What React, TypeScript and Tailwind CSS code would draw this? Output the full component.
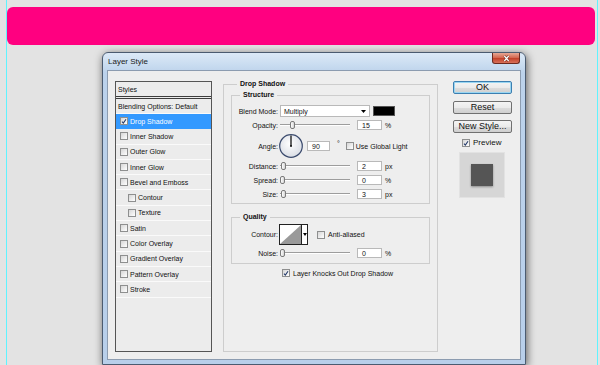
import React from "react";

type StyleItem = { label: string; on?: boolean; active?: boolean; sub?: boolean };

const styleItems: StyleItem[] = [
  { label: "Drop Shadow", on: true, active: true },
  { label: "Inner Shadow" },
  { label: "Outer Glow" },
  { label: "Inner Glow" },
  { label: "Bevel and Emboss" },
  { label: "Contour", sub: true },
  { label: "Texture", sub: true },
  { label: "Satin" },
  { label: "Color Overlay" },
  { label: "Gradient Overlay" },
  { label: "Pattern Overlay" },
  { label: "Stroke" },
];

function Box({ on }: { on?: boolean }) {
  return (
    <span className="flex h-[8px] w-[8px] shrink-0 items-center justify-center border border-[#8e8f8f] bg-[linear-gradient(135deg,#d6d6d6,#ffffff)]">
      {on && (
        <svg viewBox="0 0 8 8" className="h-[7px] w-[7px]">
          <path d="M1.3 4.3 L3.1 6.2 L6.7 1" fill="none" stroke="#233a6b" strokeWidth="1.4" />
        </svg>
      )}
    </span>
  );
}

function Slider({ at }: { at: number }) {
  return (
    <div className="relative ml-[2px] h-[10px] w-[70px] shrink-0">
      <div className="absolute left-0 right-0 top-[4px] h-[2px] border-t border-[#9d9d9d] bg-white" />
      <div
        className="absolute top-[1px] h-[8px] w-[5px] rounded-[2px] border border-[#7b7b7b] bg-[linear-gradient(90deg,#ffffff,#d5d5d5)]"
        style={{ left: at }}
      />
    </div>
  );
}

function SliderRow({ label, value, unit, at }: { label: string; value: string; unit: string; at: number }) {
  return (
    <div className="flex h-[14px] items-center">
      <span className="w-[46px] text-right">{label}</span>
      <Slider at={at} />
      <div className="ml-[7px] flex h-[10px] w-[25px] items-center border border-[#b9b9b9] bg-white pl-[4px]">{value}</div>
      <span className="ml-[3px]">{unit}</span>
    </div>
  );
}

function Btn({ children, main }: { children: React.ReactNode; main?: boolean }) {
  return (
    <div
      className={
        "flex h-[13px] items-center justify-center rounded-[2px] border bg-[linear-gradient(180deg,#f4f4f4_0%,#ebebeb_50%,#dddddd_51%,#cfcfcf_100%)] text-[9px] " +
        (main ? "border-[#3c7fb1] shadow-[inset_0_0_0_1px_#9ad6f2]" : "border-[#707070]")
      }
    >
      {children}
    </div>
  );
}

export default function App() {
  return (
    <div className="relative h-[365px] w-[600px] overflow-hidden bg-[#e3e3e3] font-['Liberation_Sans',Arial,sans-serif] text-[7px] leading-none text-[#111]">
      <div className="ml-[7px] mt-[7px] h-[38px] w-[588px] rounded-[6px] bg-[#ff0080]" />

      <div className="ml-[102px] mt-[7px] flex h-[313px] w-[424px] flex-col rounded-t-[6px] border border-[#4b5b70] bg-[linear-gradient(180deg,#dce9f7_0px,#c9dcf0_12px,#bcd2eb_20px,#b8cfea_100%)] shadow-[1px_2px_9px_rgba(0,0,0,0.6)]">
        {/* title bar */}
        <div className="flex h-[17px] items-start justify-between pl-[5px] pr-[5px]">
          <span className="pt-[5px] text-[8px] text-[#1b1b1b]">Layer Style</span>
          <div className="flex h-[11px] w-[28px] items-center justify-center rounded-b-[3px] border border-t-0 border-[#6b2a20] bg-[linear-gradient(180deg,#e6a895_0%,#d46a52_45%,#c3432b_55%,#d8705a_100%)]">
            <svg viewBox="0 0 10 8" className="h-[7px] w-[9px]">
              <path d="M2.5 1.2 L7.5 6.8 M7.5 1.2 L2.5 6.8" stroke="#5a2016" strokeWidth="2.6" />
              <path d="M2.5 1.2 L7.5 6.8 M7.5 1.2 L2.5 6.8" stroke="#ffffff" strokeWidth="1.5" />
            </svg>
          </div>
        </div>

        {/* content */}
        <div className="mx-[4px] mb-[4px] flex flex-1 items-start border border-[#8c9cb0] bg-[#eeeeee] pl-[7px] pt-[10px]">
          {/* styles list */}
          <div className="flex h-[271px] w-[97px] shrink-0 flex-col border border-[#555555] bg-[#ececec]">
            <div className="flex h-[17px] items-center border-b-[3px] border-double border-[#3d3d3d] pl-[2px]">Styles</div>
            <div className="flex h-[15px] items-center border-b border-[#fafafa] pl-[2px]">Blending Options: Default</div>
            {styleItems.map((it) => (
              <div
                key={it.label}
                className={
                  "flex h-[15.3px] items-center gap-[2px] border-b " +
                  (it.sub ? "pl-[12px] " : "pl-[4px] ") +
                  (it.active ? "border-[#3399ff] bg-[#3399ff] text-white" : "border-[#fafafa]")
                }
              >
                <Box on={it.on} />
                <span>{it.label}</span>
              </div>
            ))}
          </div>

          {/* drop shadow group */}
          <fieldset className="-mt-[1px] ml-[11px] h-[272px] w-[215px] shrink-0 border border-[#cdcdcd]">
            <legend className="ml-[13px] px-[3px] text-[7px] font-bold leading-[8px]">Drop Shadow</legend>

            <fieldset className="mx-[7px] mt-[3px] border border-[#cdcdcd] pb-[2px] pt-[6px]">
              <legend className="ml-[8px] px-[3px] font-bold leading-[8px]">Structure</legend>
              <div className="flex h-[12px] items-center">
                <span className="w-[46px] text-right">Blend Mode:</span>
                <div className="ml-[2px] flex h-[12px] w-[90px] items-center justify-between border border-[#b9b9b9] bg-white pl-[3px] pr-[3px]">
                  <span>Multiply</span>
                  <svg viewBox="0 0 5 3" className="h-[3px] w-[5px]">
                    <path d="M0 0 H5 L2.5 3 Z" fill="#000" />
                  </svg>
                </div>
                <div className="ml-[3px] h-[10px] w-[22px] border border-[#555] bg-black" />
              </div>
              <div className="mt-[1px]">
                <SliderRow label="Opacity:" value="15" unit="%" at={10} />
              </div>
              <div className="mt-[2px] flex h-[24px] items-center">
                <span className="w-[46px] text-right">Angle:</span>
                <svg viewBox="0 0 24 24" className="ml-[1px] h-[24px] w-[24px] shrink-0">
                  <defs>
                    <radialGradient id="dial" cx="45%" cy="40%" r="65%">
                      <stop offset="0%" stopColor="#ffffff" />
                      <stop offset="100%" stopColor="#d7dbe3" />
                    </radialGradient>
                  </defs>
                  <circle cx="12" cy="12" r="11.3" fill="url(#dial)" stroke="#3b4b6e" strokeWidth="1.2" />
                  <path d="M12 12 V1.5" stroke="#111" strokeWidth="1.3" />
                  <circle cx="12" cy="12" r="1" fill="#111" />
                </svg>
                <div className="ml-[4px] flex h-[10px] w-[23px] items-center border border-[#b9b9b9] bg-white pl-[4px]">90</div>
                <span className="ml-[7px] self-start pt-[6px]">°</span>
                <span className="ml-[6px]">
                  <Box />
                </span>
                <span className="ml-[2px]">Use Global Light</span>
              </div>
              <div className="mt-[1px]">
                <SliderRow label="Distance:" value="2" unit="px" at={1} />
                <SliderRow label="Spread:" value="0" unit="%" at={0} />
                <SliderRow label="Size:" value="3" unit="px" at={1} />
              </div>
            </fieldset>

            <fieldset className="mx-[7px] mt-[9px] border border-[#cdcdcd] pb-[3px] pt-[3px]">
              <legend className="ml-[8px] px-[3px] font-bold leading-[8px]">Quality</legend>
              <div className="flex h-[21px] items-center">
                <span className="w-[46px] text-right">Contour:</span>
                <div className="ml-[1px] flex h-[21px] w-[29px] border border-[#222] bg-white">
                  <svg viewBox="0 0 22 19" preserveAspectRatio="none" className="h-[19px] w-[22px] border-r border-[#222]">
                    <path d="M0 19 L22 0 V19 Z" fill="#9a9a9a" />
                  </svg>
                  <div className="flex flex-1 items-center justify-center">
                    <svg viewBox="0 0 4 3" className="h-[3px] w-[4px]">
                      <path d="M0 0 H4 L2 3 Z" fill="#000" />
                    </svg>
                  </div>
                </div>
                <span className="ml-[9px]">
                  <Box />
                </span>
                <span className="ml-[3px]">Anti-aliased</span>
              </div>
              <div className="mt-[1px]">
                <SliderRow label="Noise:" value="0" unit="%" at={0} />
              </div>
            </fieldset>

            <div className="mt-[4px] flex h-[10px] items-center pl-[58px]">
              <Box on />
              <span className="ml-[3px]">Layer Knocks Out Drop Shadow</span>
            </div>
          </fieldset>

          {/* buttons */}
          <div className="ml-[15px] flex w-[59px] shrink-0 flex-col">
            <Btn main>OK</Btn>
            <div className="mt-[6.5px]">
              <Btn>Reset</Btn>
            </div>
            <div className="mt-[6.5px]">
              <Btn>New Style...</Btn>
            </div>
            <div className="mt-[6px] flex h-[8px] items-center pl-[9px] text-[8px]">
              <Box on />
              <span className="ml-[3px]">Preview</span>
            </div>
            <div className="ml-[6px] mt-[5px] flex h-[46px] w-[46px] items-center justify-center border border-[#e2e2e2] bg-[#d6d6d6]">
              <div className="h-[22px] w-[22px] bg-[#555555] shadow-[0_1px_2px_rgba(0,0,0,0.35)]" />
            </div>
          </div>
        </div>
      </div>

      {/* guides */}
      <div className="absolute bottom-0 left-[6px] top-0 w-px bg-[#5ff3ff]" />
      <div className="absolute bottom-0 left-[597px] top-0 w-px bg-[#5ff3ff]" />
    </div>
  );
}
